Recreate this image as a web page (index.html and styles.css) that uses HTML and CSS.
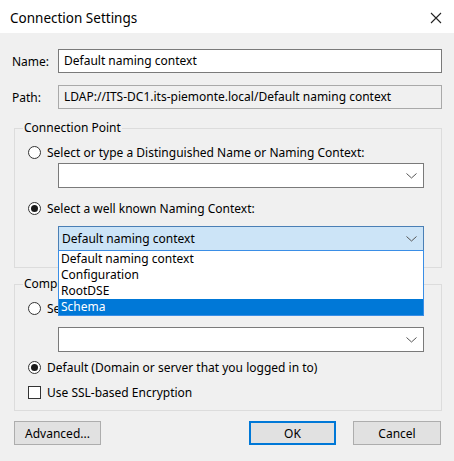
FILE: index.html
```html
<!DOCTYPE html>
<html>
<head>
<meta charset="utf-8">
<link rel="stylesheet" href="styles.css">
</head>
<body>
<div class="dialog">
  <div class="titlebar">
    <span class="title">Connection Settings</span>
    <svg class="close" width="12" height="12" viewBox="0 0 12 12"><path d="M1 1L11 11M11 1L1 11" stroke="#222" stroke-width="1.1" fill="none"/></svg>
  </div>
  <div class="content">
    <div class="row">
      <span class="label">Name:</span>
      <div class="field edit">Default naming context</div>
    </div>
    <div class="row row-path">
      <span class="label">Path:</span>
      <div class="field readonly">LDAP://ITS-DC1.its-piemonte.local/Default naming context</div>
    </div>

    <fieldset class="group group-cp">
      <legend>Connection Point</legend>
      <div class="opt opt-first"><span class="radio"></span><span>Select or type a Distinguished Name or Naming Context:</span></div>
      <div class="combo combo-1"><span class="combo-text"></span><svg class="chev" width="11" height="6" viewBox="0 0 11 6"><path d="M0.5 0.5L5.5 5L10.5 0.5" stroke="#555" stroke-width="1" fill="none"/></svg></div>
      <div class="opt opt-second"><span class="radio checked"></span><span>Select a well known Naming Context:</span></div>
      <div class="combo-wrap">
        <div class="combo combo-open"><span class="combo-text">Default naming context</span><svg class="chev" width="11" height="6" viewBox="0 0 11 6"><path d="M0.5 0.5L5.5 5L10.5 0.5" stroke="#555" stroke-width="1" fill="none"/></svg></div>
        <ul class="droplist">
          <li>Default naming context</li>
          <li>Configuration</li>
          <li>RootDSE</li>
          <li class="sel">Schema</li>
        </ul>
      </div>
    </fieldset>

    <fieldset class="group group-comp">
      <legend>Computer</legend>
      <div class="opt opt-first"><span class="radio"></span><span>Select or type a domain or server: (Server | Domain [:port])</span></div>
      <div class="combo combo-3"><span class="combo-text"></span><svg class="chev" width="11" height="6" viewBox="0 0 11 6"><path d="M0.5 0.5L5.5 5L10.5 0.5" stroke="#555" stroke-width="1" fill="none"/></svg></div>
      <div class="opt opt-default"><span class="radio checked"></span><span>Default (Domain or server that you logged in to)</span></div>
      <div class="opt opt-check"><span class="checkbox"></span><span>Use SSL-based Encryption</span></div>
    </fieldset>

    <div class="buttons">
      <div class="btn btn-adv">Advanced...</div>
      <div class="btn btn-ok">OK</div>
      <div class="btn btn-cancel">Cancel</div>
    </div>
  </div>
</div>
</body>
</html>
```
FILE: styles.css
```css
html, body {
  margin: 0;
  padding: 0;
}
body {
  width: 454px;
  height: 461px;
  background: #f0f0f0;
  font-family: "Noto Sans", "Open Sans", sans-serif;
  font-size: 12px;
  color: #000;
  overflow: hidden;
}
.dialog {
  width: 454px;
  height: 461px;
  background: #f0f0f0;
}
.titlebar {
  height: 33px;
  background: #fff;
  display: flex;
  align-items: center;
  justify-content: space-between;
  padding: 3px 12px 0 10px;
  box-sizing: border-box;
}
.title {
  font-size: 13.5px;
  color: #000;
}
.content {
  padding: 16px 12px 0 12px;
}
.row {
  display: flex;
  align-items: center;
  height: 24px;
}
.row-path {
  margin-top: 12px;
}
.label {
  width: 46px;
  flex: none;
}
.field {
  width: 384px;
  height: 24px;
  box-sizing: border-box;
  padding: 0 5px;
  line-height: 22px;
  white-space: nowrap;
  overflow: hidden;
}
.edit {
  background: #fff;
  border: 1px solid #7a7a7a;
}
.readonly {
  background: #f0f0f0;
  border: 1px solid #a9a9a9;
}
.group {
  margin: 0 1px 0 2px;
  border: 1px solid #dcdcdc;
  padding: 0 0 0 8px;
  box-sizing: border-box;
  width: 428px;
  position: relative;
}
.group legend {
  padding: 0 1px;
  line-height: 16px;
  margin-left: 0;
}
.group-cp {
  margin-top: 11px;
  padding-bottom: 16px;
}
.group-comp {
  margin-top: 8px;
  padding-bottom: 10px;
}
.opt {
  display: flex;
  align-items: center;
  height: 16px;
  margin-left: 5px;
  white-space: nowrap;
}
.opt-first {
  margin-top: 8px;
}
.opt-second {
  margin-top: 12px;
}
.opt-default {
  margin-top: 7px;
}
.opt-check {
  margin-top: 9px;
}
.radio {
  width: 13px;
  height: 13px;
  box-sizing: border-box;
  border: 1px solid #333;
  border-radius: 50%;
  background: #fff;
  margin-right: 6px;
  flex: none;
  display: flex;
  align-items: center;
  justify-content: center;
}
.radio.checked::after {
  content: "";
  width: 7px;
  height: 7px;
  border-radius: 50%;
  background: #1a1a1a;
}
.checkbox {
  width: 13px;
  height: 13px;
  box-sizing: border-box;
  border: 1px solid #333;
  background: #fff;
  margin-right: 6px;
  flex: none;
}
.combo {
  width: 366px;
  height: 25px;
  box-sizing: border-box;
  border: 1px solid #7a7a7a;
  background: #fff;
  margin-left: 35px;
  display: flex;
  align-items: center;
  justify-content: space-between;
  padding: 0 6px 0 3px;
}
.combo-1 {
  margin-top: 3px;
}
.combo-3 {
  margin-top: 11px;
}
.combo-wrap {
  position: relative;
  margin-top: 10px;
  margin-left: 35px;
  width: 366px;
}
.combo-open {
  margin-left: 0;
  background: #cce4f7;
  border-color: #4a7fb5;
}
.combo-text {
  white-space: nowrap;
}
.droplist {
  position: absolute;
  left: 0;
  top: 24px;
  width: 366px;
  box-sizing: border-box;
  margin: 0;
  padding: 0;
  list-style: none;
  background: #fff;
  border: 1px solid #3a8ee6;
  z-index: 5;
}
.droplist li {
  height: 16px;
  line-height: 16px;
  padding-left: 2px;
  white-space: nowrap;
}
.droplist li.sel {
  background: #0078d7;
  color: #fff;
}
.buttons {
  display: flex;
  margin: 10px 1px 0 2px;
}
.btn {
  height: 24px;
  box-sizing: border-box;
  border: 1px solid #adadad;
  background: #e1e1e1;
  display: flex;
  align-items: center;
  justify-content: center;
}
.btn-adv {
  width: 87px;
}
.btn-ok {
  width: 87px;
  margin-left: auto;
  border: 2px solid #0078d7;
}
.btn-cancel {
  width: 88px;
  margin-left: 17px;
}
```
